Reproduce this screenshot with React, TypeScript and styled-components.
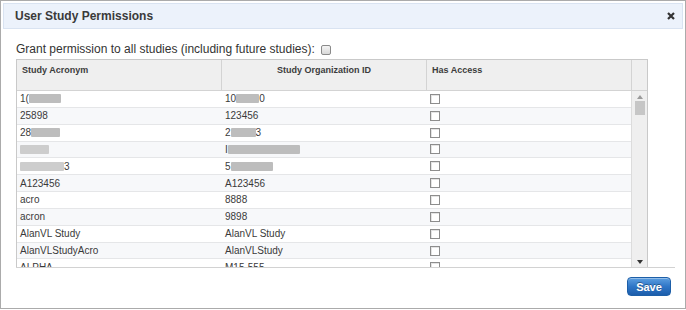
import React from 'react';
import styled, { createGlobalStyle } from 'styled-components';

const GlobalStyle = createGlobalStyle`
  html, body {
    margin: 0;
    padding: 0;
    background: #fff;
  }
  body {
    font-family: "Liberation Sans", Arial, sans-serif;
    color: #333;
  }
`;

const Dialog = styled.div`
  box-sizing: border-box;
  width: 686px;
  height: 309px;
  border: 1px solid #ababab;
  padding: 2px;
  display: flex;
  flex-direction: column;
  background: #fff;
`;

const TitleBar = styled.div`
  box-sizing: border-box;
  height: 26px;
  border: 1px solid #d9e3f1;
  background: #ecf2fb;
  display: flex;
  align-items: center;
  justify-content: space-between;
  padding: 0 7px 0 11px;
`;

const Title = styled.span`
  font-size: 12px;
  font-weight: bold;
  color: #3a3a3a;
`;

const CloseButton = styled.button`
  border: 0;
  background: none;
  padding: 0;
  width: 8px;
  height: 8px;
  display: flex;
  cursor: pointer;
`;

const Content = styled.div`
  flex: 1;
  display: flex;
  flex-direction: column;
  padding: 0 8px 0 13px;
`;

const GrantRow = styled.label`
  display: flex;
  align-items: center;
  gap: 6px;
  height: 14px;
  margin-top: 13px;
  font-size: 12px;
  color: #333;
`;

const Grid = styled.div`
  width: 632px;
  margin-top: 3px;
  box-sizing: border-box;
  border: 1px solid #c9c9c9;
  border-bottom: 0;
`;

const HeadRow = styled.div`
  display: grid;
  grid-template-columns: 205px 205px 205px 15px;
  height: 31px;
  box-sizing: border-box;
  border-bottom: 1px solid #d3d3d3;
  background: #efefef;
`;

const HeadCell = styled.div<{ $align?: string }>`
  box-sizing: border-box;
  border-right: 1px solid #d3d3d3;
  padding: 5px 5px 0;
  font-size: 9px;
  line-height: 11px;
  font-weight: bold;
  color: #3c3c3c;
  text-align: ${(p) => p.$align || 'left'};
  &:last-child {
    border-right: 0;
  }
`;

const Body = styled.div`
  display: flex;
  height: 176px;
`;

const Rows = styled.div`
  width: 614px;
  overflow: hidden;
`;

const Row = styled.div<{ $alt: boolean }>`
  display: grid;
  grid-template-columns: 205px 205px 204px;
  height: 16.85px;
  box-sizing: border-box;
  border-bottom: 1px solid #e5e6e8;
  background: ${(p) => (p.$alt ? '#f7f8fa' : '#fff')};
`;

const Cell = styled.div`
  display: flex;
  align-items: center;
  padding-left: 3px;
  font-size: 10px;
  color: #3a3a3a;
  white-space: nowrap;
  overflow: hidden;
`;

const Blur = styled.span<{ $w: number; $light?: boolean }>`
  display: inline-block;
  width: ${(p) => p.$w}px;
  height: 9px;
  border-radius: 1px;
  background: ${(p) => (p.$light ? '#cdcdcd' : '#bdbdbd')};
  filter: blur(0.6px);
`;

const Check = styled.span`
  display: inline-block;
  box-sizing: border-box;
  width: 10px;
  height: 10px;
  border: 1px solid #8d8d8d;
  background: #fff;
  box-shadow: inset 1px 1px 0 #e4e4e4;
`;

const GrantCheck = styled.span`
  display: inline-block;
  box-sizing: border-box;
  width: 10px;
  height: 10px;
  margin-top: 1px;
  border: 1px solid #8a8a8a;
  border-radius: 2px;
  background: linear-gradient(#f4f4f4, #d8d8d8);
`;

const Track = styled.div`
  width: 16px;
  box-sizing: border-box;
  border-left: 1px solid #dcdcdc;
  background: #efefef;
  display: flex;
  flex-direction: column;
  align-items: center;
  padding: 4px 0 3px;
`;

const Thumb = styled.div`
  width: 10px;
  height: 14px;
  margin-top: 2px;
  background: #c6c6c6;
`;

const Spacer = styled.div`
  flex: 1;
`;

const Footer = styled.div`
  border-top: 1px solid #d2d2d2;
  display: flex;
  justify-content: flex-end;
  padding: 9px 4px 0 0;
`;

const SaveButton = styled.button`
  width: 44px;
  height: 19px;
  padding: 0;
  border: 1px solid #1d5fa8;
  border-radius: 4px;
  background: linear-gradient(#5c9ee0 0%, #2f76c7 50%, #1c5dab 100%);
  color: #fff;
  font-family: "Liberation Sans", Arial, sans-serif;
  font-size: 11px;
  font-weight: bold;
  text-shadow: 0 -1px 0 rgba(0, 0, 0, 0.35);
  box-shadow: inset 0 1px 0 rgba(255, 255, 255, 0.35);
  cursor: pointer;
`;

type RowData = [React.ReactNode, React.ReactNode];

const rows: RowData[] = [
  [<>1(<Blur $w={32} /></>, <>10<Blur $w={23} />0</>],
  ['25898', '123456'],
  [<>28<Blur $w={29} /></>, <>2<Blur $w={25} />3</>],
  [<Blur $w={29} $light />, <>I<Blur $w={72} /></>],
  [<><Blur $w={44} $light />3</>, <>5<Blur $w={42} /></>],
  ['A123456', 'A123456'],
  ['acro', '8888'],
  ['acron', '9898'],
  ['AlanVL Study', 'AlanVL Study'],
  ['AlanVLStudyAcro', 'AlanVLStudy'],
  ['ALPHA', 'M15-555'],
];

const Arrow: React.FC<{ down?: boolean }> = ({ down }) => (
  <svg width="6" height="4" viewBox="0 0 6 4">
    <path d={down ? 'M0 0 H6 L3 4 Z' : 'M0 4 H6 L3 0 Z'} fill={down ? '#333' : '#9a9a9a'} />
  </svg>
);

const App: React.FC = () => {
  return (
    <>
      <GlobalStyle />
      <Dialog>
        <TitleBar>
          <Title>User Study Permissions</Title>
          <CloseButton aria-label="Close">
            <svg width="8" height="8" viewBox="0 0 8 8">
              <path d="M1 1 L7 7 M7 1 L1 7" stroke="#333" strokeWidth="2.2" />
            </svg>
          </CloseButton>
        </TitleBar>
        <Content>
          <GrantRow>
            Grant permission to all studies (including future studies):
            <GrantCheck />
          </GrantRow>
          <Grid>
            <HeadRow>
              <HeadCell>Study Acronym</HeadCell>
              <HeadCell $align="center">Study Organization ID</HeadCell>
              <HeadCell>Has Access</HeadCell>
              <HeadCell />
            </HeadRow>
            <Body>
              <Rows>
                {rows.map((row, i) => (
                  <Row key={i} $alt={i % 2 === 1}>
                    <Cell>{row[0]}</Cell>
                    <Cell>{row[1]}</Cell>
                    <Cell>
                      <Check />
                    </Cell>
                  </Row>
                ))}
              </Rows>
              <Track>
                <Arrow />
                <Thumb />
                <Spacer />
                <Arrow down />
              </Track>
            </Body>
          </Grid>
          <Footer>
            <SaveButton>Save</SaveButton>
          </Footer>
        </Content>
      </Dialog>
    </>
  );
};

export default App;
